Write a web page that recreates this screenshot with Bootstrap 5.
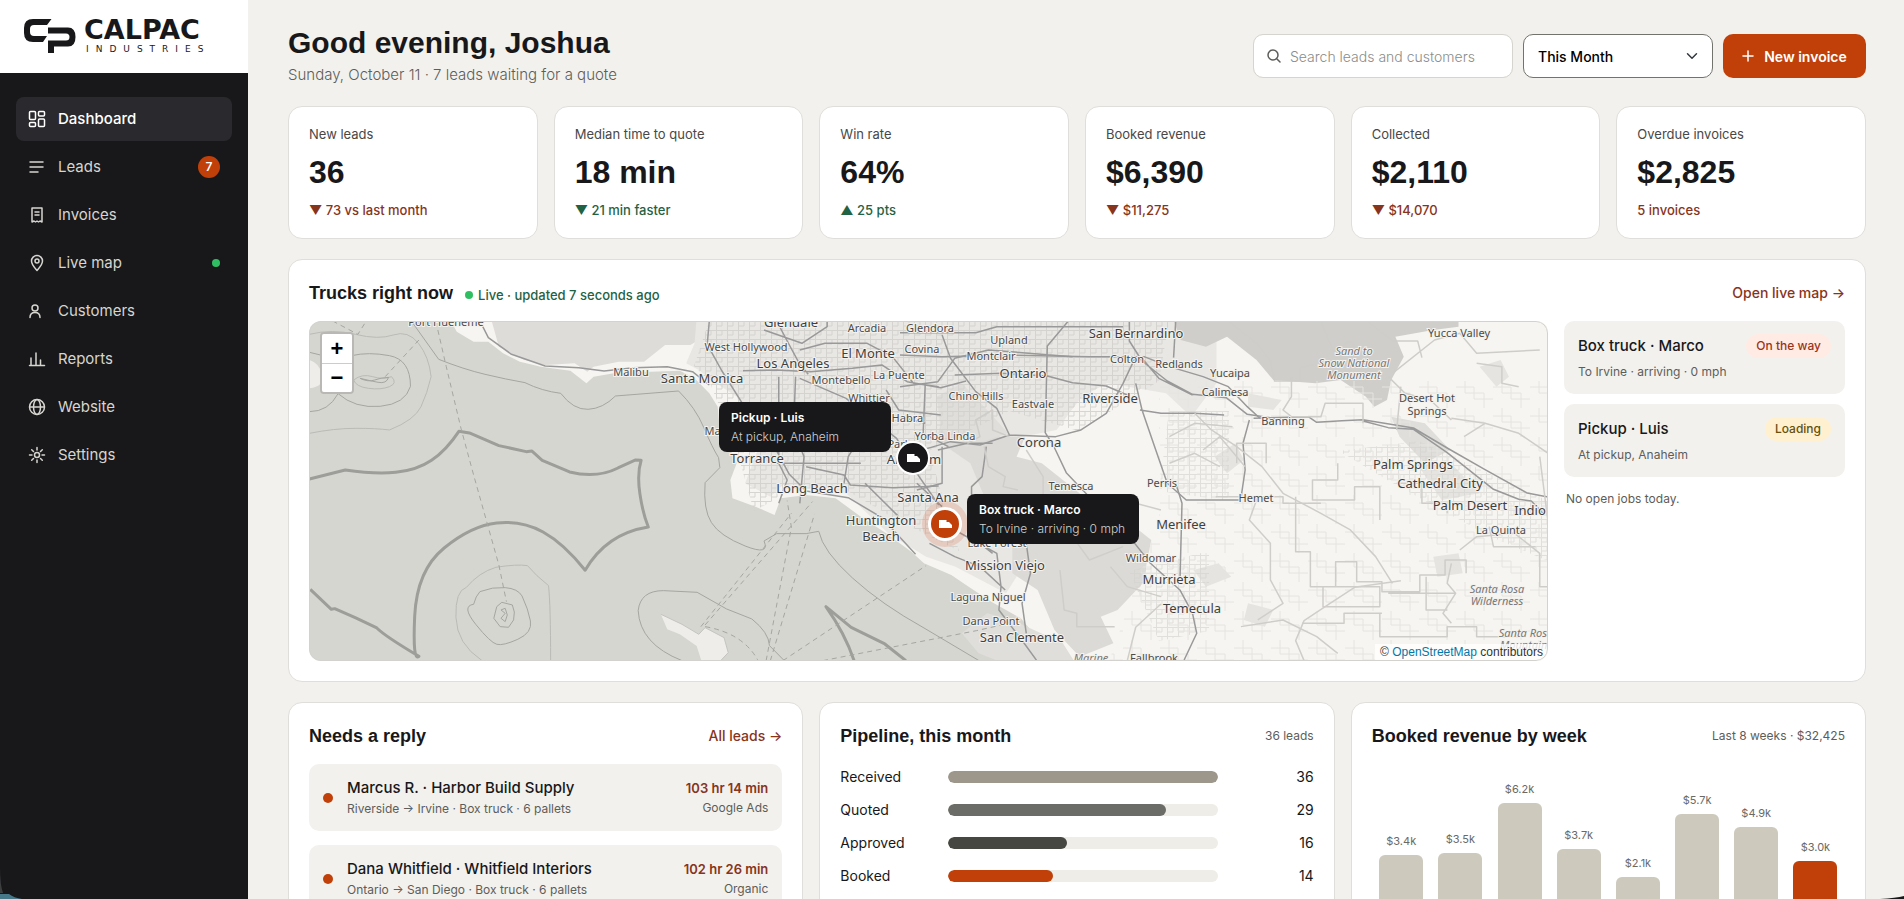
<!DOCTYPE html>
<html lang="en">
<head>
<meta charset="utf-8">
<meta name="viewport" content="width=device-width, initial-scale=1">
<title>Calpac Industries – Dashboard</title>
<link href="https://cdn.jsdelivr.net/npm/bootstrap@5.3.0/dist/css/bootstrap.min.css" rel="stylesheet">
<style>
  :root { --ink:#18181a; --paper:#f2f1ed; --rust:#c1400a; --rust-dark:#87341c; --green:#1f6344; --line:#e0deda; --muted-ink:#5d5d5a; }
  body { font-family:Inter,"Liberation Sans",sans-serif; font-size:14px; line-height:20px; color:var(--ink); background:var(--paper); height:100vh; overflow:hidden; }
  a { text-decoration:none; }
  .heading { font-family:"Liberation Sans",Arial,sans-serif; font-weight:700; margin:0; }
  .side { width:248px; background:var(--ink); flex:none; }
  .brand { height:73px; background:#fff; padding:0 24px; }
  .wordmark { font:700 27px/20px "DejaVu Sans",sans-serif; }
  .submark { font:400 9px/10px "DejaVu Sans",sans-serif; letter-spacing:7px; padding-left:2px; }
  .side .nav { padding:24px 16px; gap:4px; }
  .side .nav-link { height:44px; padding:0 12px; border-radius:8px; color:#d6d5d0; font-size:15px; display:flex; align-items:center; gap:12px; }
  .side .nav-link svg { width:18px; height:18px; fill:none; stroke:currentColor; stroke-width:1.5; stroke-linecap:round; stroke-linejoin:round; }
  .side .nav-link.active { background:#2a2a2e; color:#fff; font-weight:500; }
  .count { width:22px; height:22px; border-radius:50%; background:var(--rust); color:#fff; font-size:12px; font-weight:600; }
  .dot { width:8px; height:8px; border-radius:50%; background:#2fbf62; display:inline-block; flex:none; }
  .page-body { padding:24px 38px 24px 40px; overflow-y:auto; scrollbar-width:none; }
  .page-head { height:82px; }
  .greeting { font-size:30px; line-height:38px; }
  .subline { font-size:15px; font-weight:300; line-height:26px; color:var(--muted-ink); }
  .tools { gap:10px; padding-top:10px; }
  .tools .form-control, .tools .form-select { height:44px; border-radius:10px; font-size:14px; }
  .finder { width:260px; }
  .finder svg { left:14px; top:15px; }
  .finder .form-control { padding-left:36px; border-color:#d6d4ce; font-weight:300; }
  .finder .form-control::placeholder { color:#8c8c89; }
  .period { width:190px; border-color:#73736d; color:#000; font-weight:500; padding-left:14px; background-color:#fff; background-size:12px 12px; background-position:right 14px center; }
  .new-btn { height:44px; width:143px; border-radius:10px; background:var(--rust); color:#fff; font-size:14px; font-weight:600; padding:0; gap:10px; }
  .new-btn:hover { background:#a93808; color:#fff; }
  .stats { display:grid; grid-template-columns:repeat(6,1fr); gap:16px; margin-bottom:20px; }
  .panel { background:#fff; border:1px solid var(--line); border-radius:14px; padding:20px; }
  .stat { height:133px; padding-top:17px; }
  .stat-label { font-size:13px; color:#484846; }
  .stat-num { font-size:32px; line-height:36px; margin:10px 0; }
  .delta { font-size:13px; font-weight:500; color:var(--rust-dark); }
  .delta.up { color:var(--green); }
  .panel-title { font-size:18px; line-height:26px; }
  .more { font-size:14px; font-weight:500; color:var(--rust-dark); }
  .live-note { font-size:13px; font-weight:500; color:var(--green); padding-top:4px; margin-left:12px; gap:5px; }
  .trucks { height:423px; margin-bottom:20px; }
  .map-row { display:grid; grid-template-columns:1fr 281px; gap:16px; margin-top:15px; }
  .map { height:340px; border-radius:12px; overflow:hidden; position:relative; background:#d6d6d1; }
  .map > svg { width:100%; height:340px; display:block; }
  .map-edge { position:absolute; inset:0; border:1px solid #d3d2ce; border-radius:12px; pointer-events:none; }
  .map text { font-family:"Noto Sans",sans-serif; font-size:11px; fill:#4b4b4b; text-anchor:middle; stroke:#f4f2ee; stroke-width:2px; paint-order:stroke; dominant-baseline:central; }
  .map text.city { font-size:13px; fill:#3f3f3f; }
  .map text.wild { font-style:italic; fill:#777; }
  .trace path { vector-effect:non-scaling-stroke; stroke-linejoin:round; }
  .zoomer { position:absolute; left:11px; top:11px; width:34px; border:2px solid #b9b8b5; border-radius:4px; overflow:hidden; }
  .zoomer button { height:29px; border:0; background:#fff; width:100%; font:700 22px/28px "Liberation Sans",sans-serif; padding:0; display:block; color:#000; }
  .zoomer button + button { border-top:1px solid #ccc; }
  .credit { position:absolute; right:0; bottom:0; background:#fffc; padding:0 5px; font:12px/17px "Liberation Sans",sans-serif; color:#333; }
  .credit a { color:#0078a8; }
  .tip { position:absolute; width:172px; height:50px; padding:7px 12px; border-radius:8px; background:#18181a; color:#fff; line-height:18px; white-space:nowrap; }
  .tip strong { font-weight:600; font-size:12px; display:block; }
  .tip span { color:#d0d0ce; font-size:12px; font-weight:300; }
  .pin { position:absolute; border-radius:50%; width:34px; height:34px; border:2px solid #fff; background:#18181a; }
  .pin.hot { background:var(--rust); border-width:3px; box-shadow:0 0 0 6px #d9603533; }
  .truck-item { background:var(--paper); border-radius:10px; height:73px; padding:13px 14px; margin-bottom:10px; }
  .item-name { font-size:15px; font-weight:500; line-height:22px; }
  .item-sub { font-size:12px; line-height:20px; color:var(--muted-ink); }
  .truck-item .item-sub { margin-top:4px; }
  .idle { padding:2px; }
  .pill { font-size:12px; font-weight:500; border-radius:12px; padding:2px 10px; }
  .pill.way { background:#ffebe4; color:#9a3418; }
  .pill.load { background:#fff0cf; color:#66500e; }
  .lower { display:grid; grid-template-columns:repeat(3,1fr); gap:16px; }
  .lower .panel { height:290px; }
  .lead-list { padding-top:15px; }
  .lead-item { background:var(--paper); border-radius:10px; height:67px; padding:0 14px; gap:14px; margin-bottom:14px; }
  .lead-item .dot { width:10px; height:10px; background:var(--rust); }
  .lead-time { font-size:13px; font-weight:600; color:var(--rust-dark); line-height:20px; }
  .aside-note { font-size:12px; color:var(--muted-ink); }
  .stage-list { padding-top:11px; }
  .stage { display:grid; grid-template-columns:96px 1fr 84px; gap:12px; align-items:center; height:33px; font-size:14px; }
  .stage .progress { height:12px; border-radius:6px; background:#efede7; }
  .stage .progress-bar { border-radius:6px; }
  .chart { height:170px; display:grid; grid-template-columns:repeat(8,1fr); align-items:end; justify-items:center; }
  .chart .bar { width:44px; border-radius:6px 6px 0 0; background:#cdc9bd; margin-top:5px; }
  .chart .bar.now { background:var(--rust); }
  .chart .tag { font-size:11px; line-height:18px; color:#696966; text-align:center; }
  .corner { position:fixed; bottom:0; pointer-events:none; }
</style>
</head>
<body class="d-flex">
<aside class="side d-flex flex-column">
  <a href="#" class="brand d-flex align-items-center text-reset" aria-label="Calpac Industries">
    <svg width="52" height="35" viewBox="0 0 52 35" class="me-2 flex-shrink-0" fill="#18181a"><path d="M27.500 0H9Q0 0 0 9v5q0 9 9 9h10l4-6H10q-4 0-4-4v-3q0-4 4-4h13z"/><path d="M24 8.500h20q7.500 0 7.500 9.500t-7.500 9.500H30V34h-6V21.500h18q3.500 0 3.500-3.500t-3.500-3.500H24z"/></svg>
    <span class="d-flex flex-column gap-1"><span class="wordmark">CALPAC</span><span class="submark">INDUSTRIES</span></span>
  </a>
  <nav class="nav flex-column">
    <a class="nav-link active" href="#"><svg viewBox="0 0 18 18"><rect x="1.500" y="1.500" width="6" height="8" rx="1"/><rect x="10.500" y="1.500" width="6" height="4.500" rx="1"/><rect x="10.500" y="9" width="6" height="7.500" rx="1"/><rect x="1.500" y="12.500" width="6" height="4" rx="1"/></svg>Dashboard</a>
    <a class="nav-link" href="#"><svg viewBox="0 0 18 18"><path d="M2 4h13M2 9h13M2 14h8"/></svg>Leads<span class="count ms-auto d-flex align-items-center justify-content-center">7</span></a>
    <a class="nav-link" href="#"><svg viewBox="0 0 18 18"><path d="M4 2h10v14l-2-1-1.500 1L9 15l-1.500 1L6 15l-2 1zM7 6h4M7 9h4"/></svg>Invoices</a>
    <a class="nav-link" href="#"><svg viewBox="0 0 18 18"><path d="M9 16.500C6 13 3.500 10.500 3.500 7a5.500 5.500 0 0 1 11 0c0 3.500-2.500 6-5.500 9.500z"/><circle cx="9" cy="7" r="2"/></svg>Live map<span class="dot ms-auto"></span></a>
    <a class="nav-link" href="#"><svg viewBox="0 0 18 18"><circle cx="7" cy="6" r="3"/><path d="M2 15.500c0-3.500 2-5 5-5s5 1.500 5 5"/></svg>Customers</a>
    <a class="nav-link" href="#"><svg viewBox="0 0 18 18"><path d="M1.500 15.500h15M3 15V8M8 15V3M12.500 15v-5"/></svg>Reports</a>
    <a class="nav-link" href="#"><svg viewBox="0 0 18 18"><circle cx="9" cy="9" r="7.500"/><ellipse cx="9" cy="9" rx="3.500" ry="7.500"/><path d="M2 9h14"/></svg>Website</a>
    <a class="nav-link" href="#"><svg viewBox="0 0 18 18"><circle cx="9" cy="9" r="2.500"/><path d="M9 1.500V4M9 14v2.500M1.500 9H4M14 9h2.500M3.700 3.700l1.800 1.800M12.500 12.500l1.800 1.800M14.300 3.700l-1.800 1.800M5.500 12.500l-1.800 1.800"/></svg>Settings</a>
  </nav>
</aside>

<main class="page-body flex-grow-1">
  <header class="page-head d-flex justify-content-between align-items-start">
    <div>
      <h1 class="heading greeting">Good evening, Joshua</h1>
      <div class="subline">Sunday, October 11 · 7 leads waiting for a quote</div>
    </div>
    <div class="tools d-flex">
      <div class="finder position-relative">
        <svg class="position-absolute" width="14" height="14" viewBox="0 0 14 14" fill="none" stroke="#5d5d5a" stroke-width="1.500" stroke-linecap="round"><circle cx="6" cy="6" r="5"/><path d="M10 10l3 3"/></svg>
        <input class="form-control" type="search" placeholder="Search leads and customers" aria-label="Search leads and customers">
      </div>
      <select class="form-select period" aria-label="Period"><option>This Month</option><option>Last Month</option></select>
      <button class="btn new-btn d-flex align-items-center justify-content-center" type="button"><svg width="12" height="12" viewBox="0 0 12 12" stroke="#fff" stroke-width="1.500" stroke-linecap="round"><path d="M6 1v10M1 6h10"/></svg>New invoice</button>
    </div>
  </header>

  <section class="stats">
    <div class="panel stat"><div class="stat-label">New leads</div><div class="heading stat-num">36</div><div class="delta">▼ 73 vs last month</div></div>
    <div class="panel stat"><div class="stat-label">Median time to quote</div><div class="heading stat-num">18 min</div><div class="delta up">▼ 21 min faster</div></div>
    <div class="panel stat"><div class="stat-label">Win rate</div><div class="heading stat-num">64%</div><div class="delta up">▲ 25 pts</div></div>
    <div class="panel stat"><div class="stat-label">Booked revenue</div><div class="heading stat-num">$6,390</div><div class="delta">▼ $11,275</div></div>
    <div class="panel stat"><div class="stat-label">Collected</div><div class="heading stat-num">$2,110</div><div class="delta">▼ $14,070</div></div>
    <div class="panel stat"><div class="stat-label">Overdue invoices</div><div class="heading stat-num">$2,825</div><div class="delta">5 invoices</div></div>
  </section>

  <section class="panel trucks">
    <div class="d-flex align-items-center">
      <h2 class="heading panel-title">Trucks right now</h2>
      <span class="live-note d-flex align-items-center"><span class="dot"></span>Live · updated 7 seconds ago</span>
      <a href="#" class="more ms-auto">Open live map →</a>
    </div>
    <div class="map-row">
      <div class="map">
        <svg viewBox="0 0 1239 340" preserveAspectRatio="xMidYMid slice">
          <defs>
            <pattern id="streets" width="11" height="9" patternUnits="userSpaceOnUse"><path d="M0 .5H11M.5 0V9M6 0V5M0 5H6" stroke="#d2d1cd" fill="none"/></pattern>
            <pattern id="blocks" width="37" height="29" patternUnits="userSpaceOnUse"><path d="M0 8H18V20H37M9 0V14H28V29" stroke="#e6e4e0" fill="none"/></pattern>
          </defs>
          <g class="trace" transform="translate(-29 -71) scale(.4209 .3333)">
            <path fill="#f7f5f1" d="M400 200l20 45 40 30 35 0 35 35 40 25 50 15 70 12 38 38 17-20 55-12 80-3 70-3 35 23 35 45 20 40 5 70 25 60 15 40-15 50 5 55 55 25 45 25 15-50 60-10 70 10 60 55 60 50 60 55 30 35 65 35 35 30 60 50 70 50 20 30 50 80 30 50H3020V200z"/>
            <path fill="#dedcd9" d="M500 200l20 90 60 40 50 15 70-5 30 25 15-15 60-15 60 0 50-50 60 0 40-30-30-55z"/>
            <path fill="#e9e7e3" d="M990 200l-5 80-20 60 30 20 30 30 60 50 50 160-30 100 60 40 30-35 150 25 100 120 90 70 70 30 120 80 40-80-60-140 40-120-20-120 120-30 60-100 60-40 140 30 60 70 60-100V200z"/>
            <path fill="#dcdad7" d="M1580 470l90 10 40 80 60 0-20 60 60 20 100 100 60 80 40-10 60 60-20 130-60 80-40 20 30 80-80 40-60-80-40-120-60-50 0-120-60-90-40-120-80-70z"/>
            <path fill="#cfcecb" d="M2120 200l20 70 60 20 50-30 70 70 40 60 100 10 60-10 60 50 20 30 30-20 10-60 30-70-20-60 90-20 60-10V200z"/>
            <path fill="#dfdeda" d="M1560 440l60-40 60 80 50 70-100 40-60-50zM2640 500l80 20 60 80-60 40-60-80zM1660 1210l-40-60 60-60 60 20 120 70 30 60h-170z"/>
            <path fill="#e6e4e0" d="M2170 960l60-20 30 40-60 30zM2300 1060l60 20-20 50-50-20zM2740 920l60-10 10 60-60 10zM2220 620l50-40 20 50-40 40zM2850 350l50-20 20 50-30 30zM2700 640l90 10 60 80-90 20zM2300 430l80 20-20 30-60-10z"/>
            <path fill="#efede9" d="M905 1093l50 30 40 30 15-20 45 30 10 45-30 40h-30l-15-60-40-35-30-15z"/>
            <path fill="#efede9" d="M70 330q25 10 30 45t-30 40z"/>
          </g>
          <path d="M400 0H860L850 60L770 110L700 90L620 130L650 230L590 200L530 165L478 172L445 190L425 120L400 60L385 45Z" fill="url(#streets)" opacity=".9"/>
          <path d="M1030 130L1110 120L1239 180V240L1180 215L1080 160ZM860 90H920V180L850 170ZM820 250L900 230V310L850 320Z" fill="url(#streets)" opacity=".6"/>
          <path d="M850 60L1239 60V340H800L850 200Z" fill="url(#blocks)"/>
          <!-- depth contours and sea boundaries -->
          <g class="trace" fill="none" transform="translate(-29 -71) scale(.4209 .3333)" stroke="#a5a5a1" stroke-width="1">
            <path d="M312 213l65 115q60 30 110 45t95 25q40 25 85 32 30 50 65 48t65-40l150-15q40 50 60 110t35 90l3 30-35 45q-5 80 15 120t80 70 45-15l30-22h70l30-7q10 60 80 140t170 150l160 120 130 120"/>
            <path d="M70 485q45 0 68-54 40 45 100 38t72-60q0-80-50-92t-90 0-100-10" />
            <path stroke="#babab6" d="M70 550q60-15 110-15t80 5q60-30 75-70t24-90q-5-60-30-100t-60-25-90-2-109 0"/>
            <path stroke="#babab6" d="M175 390q20-20 45-10t45 0q15 20-5 30t-50 5q-30-5-35-25z"/>
            <path d="M190 385q20 12 35 5t33-8q-5 20-25 15t-43-12z"/>
            <path stroke="#babab6" d="M480 1232q-60-50-62-130t25-90q30-45 70-60 50-10 75-5 20 30 50 60 5 60 5 225"/>
            <path d="M475 1025q30-15 60-12t40 25q15 40 20 75t-30 55-50 15-50-60-5-60q5-25 15-38zM515 1070l12-13 25 8q8 20 3 45l-12 22-20-2-15-25z"/>
            <path d="M525 1080l10 10-10 15 10 10 5-20-5-20z"/>
            <path d="M955 1232q-100-50-104-150 5-60 60-60l80 5 70 50 60 30q40 40 42 80l35 45"/>
            <path d="M905 1093l50 30 40 30 15-20 45 30 10 45-30 40" stroke="#c4c4c0"/>
            <g stroke="#9d9d99" stroke-width="3">
              <path d="M70 687l85-27q70 13 120 7t85-36 65-87l25 5 70 38 65 18 13-2 25 28 65 35q65 20 115-12l42-24 13 1q-10 40-3 100t20 100q-100 20-150 130-50-80-100-115t-110-27-125 75-70 205 10 120q-80-60-100-85l-50-30-50-28-8 2-50-60"/>
              <path d="M1487 1232l-50-50-80-50-60-62q45 80 67 162"/>
            </g>
            <g stroke-dasharray="5 4">
              <path d="M375 240l20 110 35 185 30 140 60 270 18 110M125 213l60 40 20-40M330 270l-80 110M1000 1130l215-340M1010 1125l255-370M1155 1232l60-400-10-80M1165 1232l105-440M1195 1232l340-285M1290 1232l365-90 70-20M1010 1130q90 20 125 100"/>
            </g>
          </g>
          <!-- highways, west -->
          <g class="trace" fill="none" transform="translate(-29 -71) scale(.4209 .3333)" stroke="#999" stroke-width="1.500">
            <path d="M475 213l20 50 55 50 80 35 80 5 60 10 70-10 80-3 60 15 40 40M1020 213l-5 70 35 80 50 100 60 60 20 80 30 70 40 50 100 20 80 60 80 110M1100 362l80-2 80 5 100-10 70-10 60 50 80 18 60-20M1185 380v260l20 50-20 70M1225 380l-5 160 25 80-10 140M1235 385l110 60 60 60 60 60 40 90 60 110M1180 213l25 60 30 70 20 30M1235 300l60-20 100 0 60 40 50 80 60 10M1150 240l90 40 60-50 0-20M1250 650l90 25 15 30 100 8 110-5M1340 700l10-80 30-60M1440 420l30 60 100 15M1180 640h200M1390 700l80 100"/>
          </g>
          <!-- highways, east -->
          <g class="trace" fill="none" transform="translate(591 -71) scale(.4209 .3333)" stroke="#999" stroke-width="1.500">
            <path d="M0 248h180l50-18h300M0 315l100 5 160-5 190 5h130l60 30 80 30 60 30 45 60 30 35"/>
            <path d="M0 410l90-15 40-70 80-25 200 20M130 375l110-5 110 8 60 20 80 10 55 30M100 255l20 70 60 100 50 50 30 80M400 213l-50 75-5 260 20 40 30 80 60 80M560 320l-30 80-40 90-60 50-60 20-110-5-70 30-70-10-80 30 0 70M545 213v60l30 60 60 60 60 40 80 10 50 50 80 15M560 400l15 80 30 110 30 110 45 50h130M570 480l50 10h80l70 5M575 325l40 60 80 50M655 213l-5 110M830 510l-15 70 5 80-10 85"/>
            <path d="M840 505l130-5 20 17 60-5 50-3 120 25 80 60 90 65 100 70 80 20 70 60M1100 513l60 20 60 5 80 70 110 110 60 30 30 5 30 40"/>
            <path d="M60 400l-5 150 60 40M205 590l-10 90-25 30 0 60M130 840l100 70 10 100-5 70 60 100 30 52M70 880l60 40 60 30 60 70M160 850l60 60M300 880l10 90-20 90 10 90M545 860l50 80 70 80 30 70 10 60-30 80M655 700l15 60-5 240M100 590v110l-60 20M40 700l60 70M90 600l70-20 60 0M0 500l60 20"/>
          </g>
          <!-- county lines, parks and minor roads -->
          <g class="trace" fill="none" transform="translate(591 -71) scale(.4209 .3333)" stroke="#cfcdc9" stroke-width="1.500">
            <path d="M160 580l30-20-10-50 40-30 0 60 40 20M200 590l10 60 40 30-5 30 35 10M1000 213l30 90 40-30 20 30M780 213l70 70 30 50 10 60 60 0 0-40 40-10M1160 380l40 50 60 20 50 60M1170 370l100-100 60-20 40 60 150-10M1310 505l80 15 80 30 70 60M1180 540l10-130M700 490l40 50 60 50 60 60 50 80 90 60 70 50 60 80 40 80M930 380v60l-20 40 20 20h70l10-40 90 0 0 60M1110 213l60 60 60 0 10 50"/>
            <path d="M940 740v165h35v105h60v-75h50v60h60v30h90v-50h60v-45h50v40M1005 1010h135v60H1005zM1180 700l60 0 0 60 60 0 0 30M1040 640v50h-60v60h100v-40h60v100M1330 900l40-40 90-10 60 60v100h20M955 1120h100v-30h90M1140 1090v70h160v-30h70v30h100M1250 980v100h50M1160 1030h160M1310 940l-10 60 20 30-30 60 20 30M870 640v-60h-70l0 60M640 560l60-40 90 10M810 1130l100-20 80 50 50 50M380 960l10 120 30 10 0 40 90 0M750 740h160v20h90"/>
            <path stroke="#d0cecb" d="M850 740l-20 70 50 70 0 110 30 70-60 50M560 760l60 20M500 950l40 60 80 30M540 1232l20-100 60-70M960 1232l-20-60 20-60 60-50 60-50 110-20M300 600l40 80 0 60M410 860l40 70 80-40M640 640l60-30 60 40M1340 560l50-40M1370 340l60 10 0 50 40 10M1520 620l20 200M1400 830l10 60 100 0M720 600l40-40 60 90"/>
          </g>
          <g>
            <text x="137" y="0">Port Hueneme</text><text x="322" y="50">Malibu</text><text class="city" x="393" y="57">Santa Monica</text><text x="437" y="25">West Hollywood</text><text x="482" y="1" class="city">Glendale</text><text class="city" x="484" y="42">Los Angeles</text><text x="558" y="6">Arcadia</text><text x="621" y="6">Glendora</text><text x="613" y="27">Covina</text><text class="city" x="559" y="32">El Monte</text><text x="532" y="58">Montebello</text><text x="590" y="53">La Puente</text><text x="560" y="76">Whittier</text><text x="591" y="96">La Habra</text><text x="636" y="114">Yorba Linda</text><text x="590" y="122">Park</text><text class="city" x="605" y="138">Anaheim</text><text class="city" x="448" y="137">Torrance</text><text x="424" y="109">Manhattan</text><text class="city" x="503" y="167">Long Beach</text><text class="city" x="619" y="176">Santa Ana</text><text class="city" x="572" y="199">Huntington</text><text class="city" x="572" y="215">Beach</text><text x="688" y="221">Lake Forest</text><text class="city" x="696" y="244">Mission Viejo</text><text x="679" y="275">Laguna Niguel</text><text x="682" y="299">Dana Point</text><text class="city" x="713" y="316">San Clemente</text><text class="wild" x="782" y="336">Marine</text><text x="845" y="336">Fallbrook</text><text class="city" x="883" y="287">Temecula</text><text class="city" x="860" y="258">Murrieta</text><text x="842" y="236">Wildomar</text><text class="city" x="872" y="203">Menifee</text><text x="947" y="176">Hemet</text><text x="853" y="161">Perris</text><text x="762" y="164">Temesca</text><text x="762" y="177">Valley</text><text class="city" x="730" y="121">Corona</text><text x="724" y="82">Eastvale</text><text x="667" y="74">Chino Hills</text><text class="city" x="714" y="52">Ontario</text><text x="682" y="34">Montclair</text><text x="700" y="18">Upland</text><text class="city" x="827" y="12">San Bernardino</text><text x="818" y="37">Colton</text><text x="870" y="42">Redlands</text><text x="921" y="51">Yucaipa</text><text x="916" y="70">Calimesa</text><text class="city" x="801" y="77">Riverside</text><text x="974" y="99">Banning</text>
            <text class="wild" x="1045" y="29">Sand to</text><text class="wild" x="1045" y="41">Snow National</text><text class="wild" x="1045" y="53">Monument</text><text x="1150" y="11">Yucca Valley</text><text x="1118" y="76">Desert Hot</text><text x="1118" y="89">Springs</text><text class="city" x="1104" y="143">Palm Springs</text><text class="city" x="1131" y="162">Cathedral City</text><text class="city" x="1161" y="184">Palm Desert</text><text class="city" x="1221" y="189">Indio</text><text x="1192" y="208">La Quinta</text><text class="wild" x="1188" y="267">Santa Rosa</text><text class="wild" x="1188" y="279">Wilderness</text><text class="wild" x="1217" y="311">Santa Rosa</text><text class="wild" x="1217" y="323">Mountains</text>
          </g>
        </svg>
        <div class="pin d-flex align-items-center justify-content-center" style="left:587px;top:120px"><svg width="13" height="8" viewBox="0 0 13 8" fill="#fff"><path d="M0 0h7.500v2H10l3 3v3H0z"/></svg></div>
        <div class="pin hot d-flex align-items-center justify-content-center" style="left:619px;top:186px"><svg width="13" height="8" viewBox="0 0 13 8" fill="#fff"><path d="M0 0h7.500v2H10l3 3v3H0z"/></svg></div>
        <div class="tip" style="left:410px;top:81px"><strong>Pickup · Luis</strong><span>At pickup, Anaheim</span></div>
        <div class="tip" style="left:658px;top:173px"><strong>Box truck · Marco</strong><span>To Irvine · arriving · 0 mph</span></div>
        <div class="zoomer"><button type="button" aria-label="Zoom in">+</button><button type="button" aria-label="Zoom out">−</button></div>
        <div class="credit">© <a href="#">OpenStreetMap</a> contributors</div>
        <div class="map-edge"></div>
      </div>
      <div>
        <div class="truck-item"><div class="d-flex justify-content-between align-items-center"><span class="item-name">Box truck · Marco</span><span class="pill way">On the way</span></div><div class="item-sub">To Irvine · arriving · 0 mph</div></div>
        <div class="truck-item"><div class="d-flex justify-content-between align-items-center"><span class="item-name">Pickup · Luis</span><span class="pill load">Loading</span></div><div class="item-sub">At pickup, Anaheim</div></div>
        <div class="item-sub idle">No open jobs today.</div>
      </div>
    </div>
  </section>

  <section class="lower">
    <div class="panel">
      <div class="d-flex justify-content-between align-items-center"><h2 class="heading panel-title">Needs a reply</h2><a href="#" class="more">All leads →</a></div>
      <div class="lead-list">
        <div class="lead-item d-flex align-items-center"><span class="dot"></span><div class="flex-grow-1"><div class="item-name">Marcus R. · Harbor Build Supply</div><div class="item-sub">Riverside → Irvine · Box truck · 6 pallets</div></div><div class="text-end"><div class="lead-time">103 hr 14 min</div><div class="item-sub">Google Ads</div></div></div>
        <div class="lead-item d-flex align-items-center"><span class="dot"></span><div class="flex-grow-1"><div class="item-name">Dana Whitfield · Whitfield Interiors</div><div class="item-sub">Ontario → San Diego · Box truck · 6 pallets</div></div><div class="text-end"><div class="lead-time">102 hr 26 min</div><div class="item-sub">Organic</div></div></div>
      </div>
    </div>
    <div class="panel">
      <div class="d-flex justify-content-between align-items-center"><h2 class="heading panel-title">Pipeline, this month</h2><span class="aside-note">36 leads</span></div>
      <div class="stage-list">
        <div class="stage"><span>Received</span><div class="progress"><div class="progress-bar" style="width:100%;background:#9c968b"></div></div><span class="text-end">36</span></div>
        <div class="stage"><span>Quoted</span><div class="progress"><div class="progress-bar" style="width:81%;background:#6b6b68"></div></div><span class="text-end">29</span></div>
        <div class="stage"><span>Approved</span><div class="progress"><div class="progress-bar" style="width:44%;background:#464741"></div></div><span class="text-end">16</span></div>
        <div class="stage"><span>Booked</span><div class="progress"><div class="progress-bar" style="width:39%;background:#c1400a"></div></div><span class="text-end">14</span></div>
      </div>
    </div>
    <div class="panel">
      <div class="d-flex justify-content-between align-items-center"><h2 class="heading panel-title">Booked revenue by week</h2><span class="aside-note">Last 8 weeks · $32,425</span></div>
      <div class="chart">
        <div><div class="tag">$3.4k</div><div class="bar" style="height:64px"></div></div>
        <div><div class="tag">$3.5k</div><div class="bar" style="height:66px"></div></div>
        <div><div class="tag">$6.2k</div><div class="bar" style="height:116px"></div></div>
        <div><div class="tag">$3.7k</div><div class="bar" style="height:70px"></div></div>
        <div><div class="tag">$2.1k</div><div class="bar" style="height:42px"></div></div>
        <div><div class="tag">$5.7k</div><div class="bar" style="height:105px"></div></div>
        <div><div class="tag">$4.9k</div><div class="bar" style="height:92px"></div></div>
        <div><div class="tag">$3.0k</div><div class="bar now" style="height:58px"></div></div>
      </div>
    </div>
  </section>
</main>
<svg class="corner start-0" width="24" height="36" viewBox="0 0 24 36"><path fill="#3c3e40" d="M0 4q0 18 3 26H0z"/><path fill="#457889" d="M0 31h9q5 4 13 5H0z"/></svg>
<svg class="corner end-0" width="24" height="3" viewBox="0 0 24 3"><path fill="#18181a" d="M24 0Q16 2 0 3h24z"/></svg>
<script src="https://cdn.jsdelivr.net/npm/bootstrap@5.3.0/dist/js/bootstrap.bundle.min.js"></script>
</body>
</html>
